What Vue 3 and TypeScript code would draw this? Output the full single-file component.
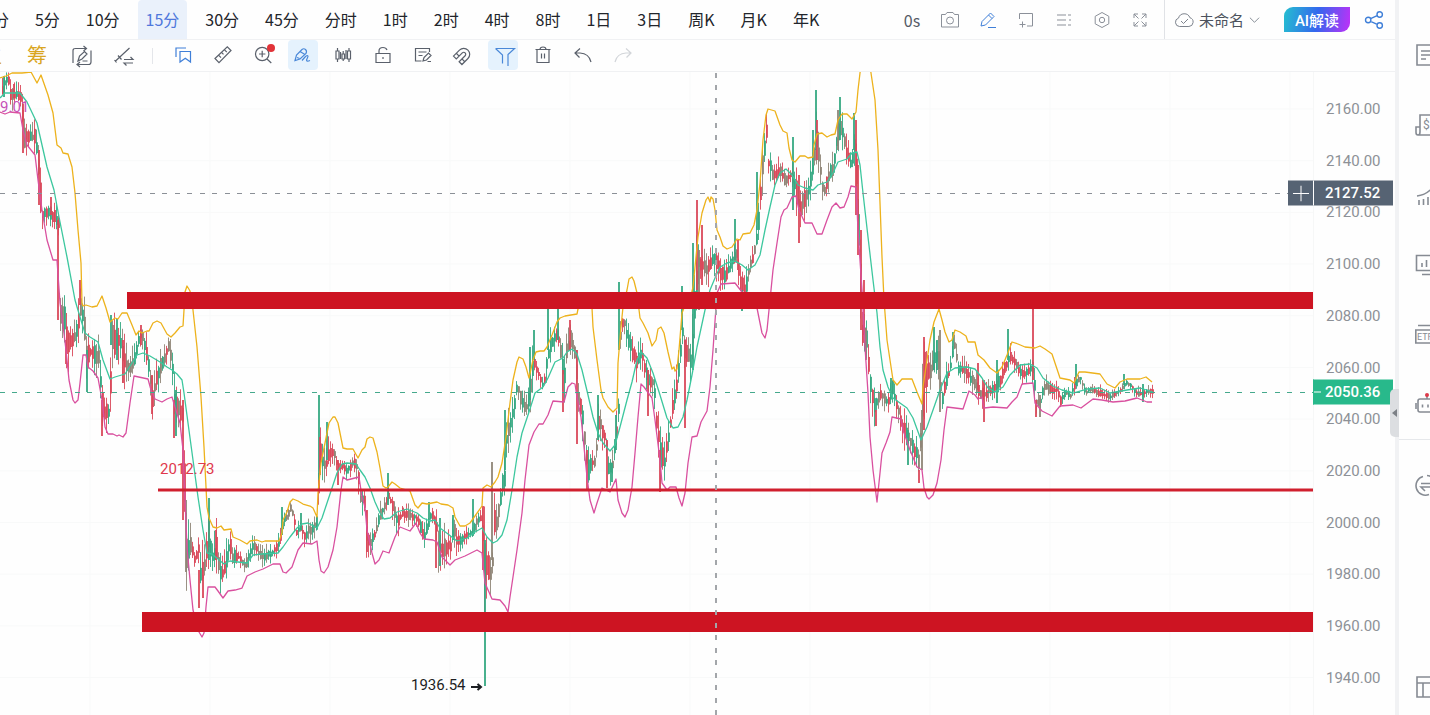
<script setup lang="ts">
interface Icon { d: string; turn?: string; mark?: string; mx?: number; my?: number; ms?: number }
interface Bar { x: number; top: number; bottom: number; tone: string; width: number }

const periods = ['3分', '5分', '10分', '15分', '30分', '45分', '分时', '1时', '2时', '4时', '8时', '1日', '3日', '周K', '月K', '年K']
const activePeriod = '15分'

const headerTools: { label: string; icon: Icon; active?: boolean }[] = [
  { label: '截图', icon: { d: 'M1.5 4.5h4l1.5-2h6l1.5 2h4v12.500h-17zM6.500 10.500a3.500 3.500 0 1 0 7 0a3.500 3.500 0 1 0-7 0' } },
  { label: '画线', icon: { d: 'M3 16l1-4.500 8.500-8.500 3.500 3.500-8.500 8.500zM10.500 5l3.500 3.500M10 17.500h8' }, active: true },
  { label: '添加窗格', icon: { d: 'M3.500 9V3.500h13v12.500H11M3.500 14.500h6M6.500 11.500v6' } },
  { label: '列表', icon: { d: 'M3 5h9M3 10h9M3 15h9M14 5h3M15 10h2M14 15h3' } },
  { label: '设置', icon: { d: 'M10 2.500l6.800 3.800v7.500L10 17.500l-6.800-3.700V6.300zM7.300 10a2.700 2.700 0 1 0 5.400 0a2.700 2.700 0 1 0-5.400 0' } },
  { label: '全屏', icon: { d: 'M4 8V4h4M4 4l4.500 4.500M12 4h4v4M16 4l-4.500 4.500M4 12v4h4M4 16l4.500-4.500M12 16h4v-4M16 16l-4.500-4.500' } },
]

const drawTools: { label: string; icon: Icon; active?: boolean; dot?: boolean; off?: boolean }[] = [
  { label: '书签', icon: { d: 'M3 12V3h10M7 6.500h10.500V17l-5.200-3.700L7 17z' }, active: false },
  { label: '测量', icon: { d: 'M2 13.500L14.300 1.800 18 5.500 6 17.600zM5.500 10.200l2.500 2.500M8.500 7.400l2 2M11.300 4.700l2.500 2.500' } },
  { label: '放大', icon: { d: 'M2.500 9a6.700 6.700 0 1 0 13.400 0a6.700 6.700 0 1 0-13.400 0M14 14l4.300 4M9.200 5.800v6.400M6 9h6.400' }, dot: true },
  { label: '画笔', icon: { d: 'M2 15.500l1.500-5.500L9 4.500q1.800-1.500 3.500 0t.5 4L7 14zM7 6.500l5 3M4 12.500l2.500 1M9 15.500l3.500-4q2.500-2 2.500 0l-1.500 3.500q0 2 3.500.5' }, active: true },
  { label: '蜡烛', icon: { d: 'M3 6h3v8H3zM4.500 3v3M4.500 14v3M9 9h2.500v5H9zM10.200 6v3M10.200 14v2M14.500 6h3v8h-3zM16 3v3M16 14v3M7.500 7v7M13 5v9' } },
  { label: '锁定', icon: { d: 'M3 8.500h14v9H3zM6 8.500V6q0-3.500 4-3.500 3 0 4 2.500M10 12v2' } },
  { label: '备注', icon: { d: 'M16.500 7V3.500h-14v12.500h6M5.500 7h8M5.500 10.500h4M10 16l1-3.500 4.500-4.500 2.500 2.500-4.500 4.500zM14.500 16.500H18' } },
  { label: '磁铁', icon: { d: 'M4 17.500V9a6 6 0 0 1 12 0v8.500h-4V9a2 2 0 0 0-4 0v8.500zM4 13.500h4M12 13.500h4', turn: 'rotate(45 10 10)' } },
  { label: '筛选', icon: { d: 'M2.500 3.500h19l-6.500 6V21M2.500 3.500L9.500 10v8.500' }, active: true },
  { label: '删除', icon: { d: 'M2.500 4.500h15M4 4.500h12v13H4zM7 4.500Q7 2 10 2t3 2.500M8.500 8.500v5M11.500 8.500v5' } },
  { label: '撤销', icon: { d: 'M7 3.500L2 8l4.500 4.500M2 8h5q9 .5 11 9' } },
  { label: '重做', icon: { d: 'M13 3.500L18 8l-4.500 4.500M18 8h-5q-9 .5-11 9' }, off: true },
]

const leadTools: { label: string; icon: Icon }[] = [
  { label: '切换编辑', icon: { d: 'M1 17V4.500Q1 2.500 3.500 2.500H14M11.500 0l3 2.500-3 2.500M19 4.500V16q0 2.500-2.500 2.500H5.500M8 16l-3 2.500L8 21M6 15l1.500-5 5-4.500L15 8l-5 5zM10.500 15h5' } },
  { label: '对比', icon: { d: 'M2 15.500L16.500 2M1.500 14l2 2.500M5 9.500l3.500 4M11 13.500H20l-2.500-2.500M20 17h-9l2.500 2.500' } },
]

const railIcons: { label: string; icon: Icon; alert?: boolean }[] = [
  { label: '资讯', icon: { d: 'M2 2h19v20H2zM6 8h12M6 12h12M6 16h5' } },
  { label: '账单', icon: { d: 'M5 2h17v20H3q-2 0-2-2.500V14h4zM5 14v5q0 3-2 3', mark: '$', mx: 8, my: 16, ms: 12 } },
  { label: '行情', icon: { d: 'M2 13q10-1 17-10M4 17v5M8.500 16v6M13 14v8M17.500 11v11' } },
  { label: '分析', icon: { d: 'M1.500 2.500h22v15h-22zM7 10v4M11.500 7v7M16 9v5M7 21.500h14' } },
  { label: '基金', icon: { d: 'M3 2.500h20M.8 7h23v13H.8z', mark: 'ETF', mx: 2, my: 17, ms: 9 } },
  { label: '助手', icon: { d: 'M5 6h16q2 0 2 2v9q0 2-2 2H5q-2 0-2-2V8q0-2 2-2zM1 10v6M12 3v3M7.500 11.500v3M13 11.500v3' }, alert: true },
]
const exchangeIcon: Icon = { d: 'M8 3.500A9.500 9.500 0 1 0 14 21.500M12 2.500a9.500 9.500 0 0 1 8 5M6 10.500h14l-4-4M20 14H6l4 4' }
const layoutIcon: Icon = { d: 'M2 2h22v20H2zM2 8h22M8 8v14' }

const priceTicks = [2160, 2140, 2120, 2100, 2080, 2060, 2040, 2020, 2000, 1980, 1960, 1940]

const chart = { left: 0, top: 72, width: 1313, height: 643 }
const priceY = (p: number): number => 109 + (2160 - p) * 2.5843
const place = (x: number, y: number) => ({
  left: `${((x - chart.left) / chart.width) * 100}%`,
  top: `${((y - chart.top) / chart.height) * 100}%`,
})
const placeY = (y: number) => ({ top: `${((y - chart.top) / chart.height) * 100}%` })

const gridX = Array.from({ length: 11 }, (_, i) => 90 + i * 120)
const gridY = priceTicks.map(priceY)

const upper = `0,78 6,76 12,73 22,73 31,72 37,83 41,75 48,95 53,113 57,145 61,148 63,153 68,154 72,167 75,193 78,230 81,263 82,303 83,306 86,305 92,307 97,306 102,296 106,308 110,322 115,318 118,319 122,313 127,313 132,325 136,335 139,331 142,333 147,331 149,331 153,323 157,321 161,323 167,334 171,337 175,333 180,327 183,326 184,310 185,292 187,286 190,291 193,310 197,347 201,397 204,447 207,507 209,518 213,527 217,528 221,526 224,530 231,529 233,537 240,540 247,544 250,541 257,540 262,542 265,541 279,541 282,533 283,520 287,512 290,502 293,499 298,501 303,504 310,506 313,508 317,517 318,493 321,463 325,443 329,423 333,417 335,417 338,423 343,448 347,449 353,449 358,458 362,450 365,447 367,439 370,437 373,438 377,452 380,468 383,486 386,488 388,487 392,482 395,484 400,488 410,491 415,505 418,508 422,503 427,504 437,502 441,504 448,505 453,508 455,517 460,526 465,526 470,523 475,516 482,506 483,488 487,485 491,487 495,482 498,477 502,463 506,437 510,403 513,380 517,362 519,357 523,359 526,367 529,378 533,360 536,352 540,351 544,351 547,347 552,335 557,322 560,318 565,316 577,314 578,309 585,306 592,308 593,327 597,360 601,390 603,398 608,407 613,412 617,408 618,363 621,327 623,307 627,290 629,279 632,277 634,281 637,293 640,318 643,323 648,333 652,346 656,340 658,329 661,327 664,333 668,352 672,369 674,367 675,371 677,369 679,350 682,313 686,303 690,300 693,287 698,237 702,213 706,200 708,197 710,202 711,197 713,199 715,210 717,230 720,237 723,246 727,249 732,247 737,239 740,240 743,234 750,233 754,225 757,210 760,183 763,140 766,115 768,109 775,111 780,125 783,131 787,133 789,148 792,160 795,162 800,156 805,156 808,158 813,157 814,145 817,134 822,133 827,137 831,135 835,134 838,120 842,114 847,114 852,119 856,112 858,90 860,73 861,66 870,66 871,73 875,100 878,150 880,203 882,257 884,300 885,313 887,340 890,360 893,380 897,385 902,379 912,379 917,392 922,404 923,387 927,360 930,340 934,322 939,309 942,320 945,332 949,342 952,340 955,330 960,332 966,336 968,342 975,342 978,355 984,360 990,368 997,373 1002,367 1007,355 1012,342 1018,344 1025,347 1035,348 1040,346 1045,349 1052,354 1055,363 1060,378 1070,380 1074,383 1079,372 1085,372 1100,374 1107,384 1115,388 1120,382 1127,379 1140,379 1146,377 1152,382`
const middle = `0,98 5,93 20,93 27,102 37,123 42,145 47,167 54,190 59,217 67,257 75,300 80,317 85,333 90,337 98,342 103,360 110,379 115,377 125,374 132,363 137,355 143,353 150,356 155,359 160,362 167,367 172,370 177,374 182,380 184,393 188,423 193,460 198,497 203,530 207,553 212,554 218,559 224,564 230,561 238,562 247,563 253,555 262,554 278,553 283,547 290,537 297,528 302,524 308,523 317,528 322,518 327,503 332,488 337,473 342,464 347,463 356,464 360,470 365,477 370,488 375,502 380,513 384,519 390,518 397,512 407,509 417,513 423,518 430,521 435,520 440,528 448,534 457,541 467,538 475,532 482,528 487,537 493,543 497,541 502,535 507,520 512,490 517,457 522,433 529,412 535,393 543,387 548,378 555,362 563,358 567,352 572,349 577,354 582,370 588,395 593,417 598,433 603,443 610,451 615,445 620,427 627,400 632,382 637,360 641,352 647,358 653,373 660,395 667,418 673,428 678,427 683,417 687,400 692,375 697,347 705,310 710,290 715,278 720,267 727,263 735,261 742,265 748,270 755,265 760,255 765,230 770,207 775,185 780,173 786,169 792,175 798,185 805,188 813,190 818,185 827,182 833,173 838,162 847,159 852,153 857,152 860,165 863,193 868,237 873,280 877,313 880,347 883,370 888,387 893,398 900,403 907,408 913,418 921,440 927,427 933,410 940,390 947,373 955,368 967,367 975,369 982,378 988,388 995,392 1003,387 1010,375 1020,365 1030,364 1037,368 1043,378 1053,386 1062,390 1073,393 1087,389 1100,388 1110,393 1127,390 1140,388 1153,392`
const lower = `0,112 5,114 10,112 20,113 23,130 27,145 35,155 38,180 42,210 47,240 53,260 57,260 60,303 62,317 66,350 69,380 73,400 75,403 78,400 80,383 83,355 86,355 88,367 93,371 98,378 102,400 105,427 108,434 113,434 117,436 119,435 123,437 126,433 130,403 134,376 148,379 151,390 155,399 162,402 167,399 172,397 175,407 180,423 183,450 185,500 187,547 190,580 193,610 199,632 202,637 204,633 206,607 208,587 215,587 218,591 223,598 228,591 235,590 242,588 247,576 255,572 263,569 273,564 280,564 283,572 286,573 292,567 298,550 303,543 312,544 317,541 319,560 321,571 324,573 328,567 333,550 337,527 341,490 343,477 347,480 359,477 362,497 365,507 367,530 372,553 375,564 379,560 383,551 389,553 395,537 400,527 410,531 416,523 420,533 424,539 433,540 437,542 442,557 450,565 455,560 465,556 477,550 482,553 485,583 492,599 500,600 505,606 508,612 510,597 513,577 517,550 522,513 525,480 529,445 534,432 539,424 543,424 548,415 553,401 564,402 568,387 572,383 575,384 577,397 581,417 584,447 587,477 590,500 594,513 597,503 602,488 610,492 616,479 618,500 622,513 625,517 628,510 632,487 635,453 638,417 641,384 644,387 652,398 655,420 660,460 662,483 667,490 670,487 676,487 679,498 682,506 685,493 688,463 692,437 697,436 701,422 707,411 710,387 713,350 716,307 717,293 721,284 735,283 742,292 750,296 757,308 762,333 765,338 767,330 770,300 773,270 777,243 781,217 784,210 787,208 792,197 796,196 799,210 805,223 812,223 817,234 822,234 827,220 832,207 836,203 840,208 844,207 848,197 851,186 856,187 858,230 862,290 865,347 868,393 870,437 873,470 877,502 880,473 882,453 886,443 890,432 892,417 901,419 903,430 910,450 917,467 922,470 924,488 927,497 929,499 933,495 937,483 941,460 944,430 947,407 963,409 969,391 975,395 978,399 982,397 984,408 993,407 1007,408 1012,402 1017,397 1022,384 1033,383 1035,403 1042,411 1052,416 1060,406 1073,405 1081,408 1093,399 1102,400 1113,402 1125,401 1137,398 1147,402 1152,402`

const ranges = `2,85,98 5,73,82 8,75,85 10,85,100 20,88,102 23,110,130 24,125,150 29,128,145 35,128,145 37,150,165 39,165,200 41,200,230 43,205,220 50,202,220 58,217,230 59,255,290 60,300,330 64,305,330 66,325,362 70,335,350 75,325,345 79,303,325 81,290,320 83,305,340 86,335,365 90,343,360 97,345,370 99,345,375 101,385,412 103,400,425 108,405,420 110,370,400 111,320,350 115,330,360 119,328,350 123,340,370 128,360,377 133,355,375 137,335,350 141,328,340 146,345,365 149,360,380 152,390,410 155,370,390 160,357,375 165,345,362 168,340,355 172,358,375 174,385,420 178,395,420 183,410,425 184,450,510 186,535,570 190,535,553 194,553,565 198,540,555 200,555,590 203,560,585 206,540,560 208,520,550 212,545,565 216,535,560 220,565,585 224,560,578 229,535,552 232,545,567 237,552,560 245,560,572 252,540,550 255,543,552 260,550,562 265,550,562 272,548,557 279,535,548 283,515,525 287,510,520 291,502,512 296,527,535 300,523,532 304,530,540 311,522,535 317,515,530 319,440,470 321,445,470 325,460,475 329,440,458 333,448,458 338,462,472 342,463,470 347,465,475 353,457,468 357,460,475 360,490,505 364,492,510 366,520,545 370,535,548 374,530,540 378,512,525 383,503,512 388,490,500 392,500,512 397,515,530 402,507,517 408,510,522 414,512,520 419,518,530 423,530,545 427,520,530 431,508,518 435,515,525 438,530,560 442,540,560 447,535,555 450,540,553 453,520,535 457,535,550 462,535,545 467,530,538 472,528,537 477,515,525 481,512,520 484,540,600 487,550,580 490,560,580 492,555,570 493,490,540 495,520,540 498,500,520 501,475,500 504,470,490 506,430,450 510,410,435 514,395,410 517,378,390 521,395,412 527,400,412 530,370,400 533,350,370 537,365,378 543,383,390 546,355,375 549,340,355 553,330,345 557,330,340 561,345,365 563,370,400 566,340,360 570,330,350 575,345,365 577,380,400 581,400,425 585,430,455 587,460,485 591,455,470 595,457,468 598,410,430 602,420,440 606,440,450 608,460,475 612,455,475 615,430,450 618,400,420 620,320,350 623,310,325 627,330,345 632,345,362 637,350,370 641,345,362 645,365,378 649,375,390 653,375,390 656,410,430 660,440,470 664,450,470 668,430,445 672,400,415 675,380,400 679,350,370 682,320,340 685,340,370 690,350,370 693,310,340 695,265,320 698,250,275 702,255,275 707,260,280 713,245,262 719,262,280 725,270,285 730,255,270 736,250,260 740,275,292 745,280,300 748,265,275 753,250,262 757,225,245 760,180,205 763,140,170 766,120,140 768,155,170 773,165,185 780,165,180 785,175,187 790,170,180 795,175,200 799,195,220 804,190,210 808,180,200 812,160,180 816,125,150 820,160,180 823,185,200 828,165,185 833,160,175 837,125,145 841,115,135 846,140,160 851,160,172 855,125,150 857,190,240 860,250,300 862,310,350 866,330,350 869,370,390 874,395,415 880,390,400 887,395,408 892,380,395 898,405,418 903,420,440 908,430,445 913,440,458 919,450,472 921,400,440 924,350,400 927,360,385 931,365,380 935,345,360 938,350,370 941,395,410 945,370,390 949,365,375 954,340,350 958,362,378 963,360,375 970,370,385 976,380,395 980,385,400 985,390,400 989,383,395 995,383,393 1000,370,385 1005,360,372 1010,350,362 1015,360,370 1020,368,376 1025,370,380 1030,362,372 1033,355,375 1035,395,410 1040,395,405 1044,380,392 1050,385,395 1056,385,395 1060,395,405 1065,388,396 1070,392,398 1075,378,388 1080,375,382 1085,390,396 1090,386,392 1100,390,398 1110,394,400 1120,387,392 1126,380,385 1132,385,390 1137,390,398 1142,390,396 1148,388,394 1153,388,394`
  .split(' ').map((item) => item.split(',').map(Number))

const spikes = `4,76,97,g 14,84,98,r 23,110,153,r 39,150,205,r 51,197,215,r 58,220,320,r 80,280,305,r 87,350,392,g 66,340,364,r 102,400,436,r 111,315,345,g 117,319,360,g 123,340,383,r 141,325,345,r 152,375,414,r 174,400,438,r 176,390,436,g 183,400,520,r 186,500,572,m 209,498,560,g 199,570,608,r 203,575,598,r 216,530,560,r 319,395,480,g 320,437,475,r 327,422,460,g 338,460,485,r 388,473,505,g 367,510,552,r 436,520,568,r 440,518,566,g 282,507,535,g 301,513,530,g 429,502,520,g 453,515,540,g 473,499,530,g 483,506,570,r 485,540,686,g 492,462,560,m 505,410,470,g 530,347,400,g 534,330,360,g 548,308,350,g 558,308,340,g 563,370,412,r 570,320,350,r 577,350,444,r 587,450,489,r 607,440,488,r 612,463,482,g 598,395,440,g 619,282,350,g 616,415,450,g 660,450,492,r 648,370,416,r 682,286,330,g 685,340,428,r 693,243,370,g 697,200,290,r 699,250,310,m 702,225,285,r 735,219,260,g 738,240,270,r 742,290,311,g 757,172,230,g 793,137,210,g 799,175,243,r 816,90,150,g 813,130,170,g 817,120,160,r 840,97,140,g 838,110,150,m 854,113,150,g 856,120,215,r 858,165,255,r 861,230,330,r 864,280,335,r 866,328,360,m 876,410,426,r 891,378,395,g 908,430,465,g 919,470,483,r 924,337,430,r 922,410,470,m 934,327,370,g 937,340,370,g 940,330,412,m 953,332,350,g 978,363,390,r 984,380,422,r 997,360,403,g 1008,329,360,g 1033,309,380,r 1036,400,417,r 1040,395,417,m 1076,364,385,g 1124,374,385,g 1143,384,402,g`
  .split(' ').map((item) => item.split(','))

const palette: Record<string, string> = { r: '#d9485a', g: '#35a882', m: '#8f8577' }

function buildBars(): Bar[] {
  const bars: Bar[] = []
  let seed = 17
  const next = (): number => {
    seed = (seed * 16807) % 2147483647
    return seed / 2147483647
  }
  let segment = 0
  for (let x = 2; x <= 1152; x += 2) {
    while (segment < ranges.length - 2 && ranges[segment + 1][0] <= x) segment++
    const [x0, t0, b0] = ranges[segment]
    const [x1, t1, b1] = ranges[segment + 1]
    const k = (x - x0) / (x1 - x0)
    const top = t0 + (t1 - t0) * k
    const bottom = b0 + (b1 - b0) * k
    const size = bottom - top
    const roll = next()
    const red = t1 < t0 ? 0.25 : 0.5
    const tone = roll < red ? 'r' : roll < 0.75 ? 'g' : 'm'
    const start = top + size * next() * 0.4
    const end = bottom - size * next() * 0.35
    bars.push({ x, top: start, bottom: end, tone, width: 2 })
    bars.push({ x, top: start - size * next() * 0.8, bottom: end + size * next() * 0.8, tone, width: 1 })
  }
  for (const [x, top, bottom, tone] of spikes) bars.push({ x: Number(x) - 1, top: Number(top), bottom: Number(bottom), tone, width: 2 })
  return bars
}
const bars = buildBars()
</script>

<template>
  <div class="app">
    <main class="main">
      <header class="head">
        <nav class="periods" aria-label="周期">
          <button v-for="p in periods" :key="p" type="button" class="period" :class="{ on: p === activePeriod }">{{ p }}</button>
        </nav>
        <div class="tools">
          <button type="button" class="seconds">0s</button>
          <button v-for="t in headerTools" :key="t.label" type="button" class="tool" :class="{ blue: t.active }" :aria-label="t.label">
            <svg class="icon" viewBox="0 0 20 20"><path :d="t.icon.d" /></svg>
          </button>
        </div>
        <div class="account">
          <button type="button" class="name">
            <svg class="icon" viewBox="0 0 20 20"><path d="M5.500 16.500a4.300 4.300 0 0 1-1-8.400 6 6 0 0 1 11.400-.4 4.500 4.500 0 0 1-1 8.800zM7 11l2.500 2.500L14 9" /></svg>
            <span>未命名</span>
            <svg class="chevron" viewBox="0 0 12 8"><path d="M1 1.500l5 5 5-5" /></svg>
          </button>
          <button type="button" class="ai">AI解读</button>
          <button type="button" class="share" aria-label="分享">
            <svg class="icon" viewBox="0 0 20 20"><path d="M1.500 10a2.700 2.700 0 1 0 5.400 0a2.700 2.700 0 1 0-5.400 0M13 4.500a2.700 2.700 0 1 0 5.400 0a2.700 2.700 0 1 0-5.400 0M13 15.500a2.700 2.700 0 1 0 5.400 0a2.700 2.700 0 1 0-5.400 0M6.600 8.700L13.200 5.600M6.600 11.300l6.600 3" /></svg>
          </button>
        </div>
      </header>

      <div class="draw" role="toolbar" aria-label="画图工具">
        <div class="lead">
          <button type="button" class="glyph">主</button>
          <button type="button" class="glyph">筹</button>
          <button v-for="t in leadTools" :key="t.label" type="button" class="swap" :aria-label="t.label">
            <svg class="icon" viewBox="0 0 20 20"><path :d="t.icon.d" /></svg>
          </button>
        </div>
        <div class="marks">
          <button v-for="(t, i) in drawTools" :key="t.label" type="button" class="mark" :class="{ on: t.active, blue: i === 0, off: t.off }" :aria-label="t.label">
            <svg class="icon" viewBox="0 0 20 20"><path :d="t.icon.d" :transform="t.icon.turn" /></svg>
            <i v-if="t.dot" class="dot"></i>
          </button>
        </div>
      </div>

      <section class="stage">
        <div class="pane">
          <svg class="plot" viewBox="0 72 1313 643" preserveAspectRatio="none" role="img" aria-label="K线图">
            <g class="grid">
              <line v-for="x in gridX" :key="'x' + x" :x1="x" :x2="x" y1="72" y2="715" />
              <line v-for="y in gridY" :key="'y' + y" x1="0" x2="1313" :y1="y" :y2="y" />
            </g>
            <g class="bars">
              <rect v-for="(b, i) in bars" :key="i" :x="b.x" :y="b.top" :width="b.width" :height="b.bottom - b.top" :fill="palette[b.tone]" />
            </g>
            <polyline class="band gold" :points="upper" />
            <polyline class="band teal" :points="middle" />
            <polyline class="band pink" :points="lower" />
            <line class="last" x1="0" x2="1313" y1="392.5" y2="392.5" />
            <line class="cross" x1="0" x2="1288" y1="193.5" y2="193.5" />
            <rect class="zone" x="127" y="292" width="1186" height="17" />
            <rect class="zone" x="142" y="612" width="1171" height="20" />
            <line class="level" x1="158" x2="1313" y1="490" y2="490" />
            <line class="cross tall" x1="716" x2="716" y1="73" y2="715" />
          </svg>
          <span class="note purple" :style="place(0, 107)">9.01</span>
          <span class="note red" :style="place(160, 469)">2012.73</span>
          <span class="note" :style="place(411, 685)">1936.54
            <svg class="arrow" viewBox="0 0 12 8"><path d="M0 4h10M6.500 1L10 4 6.500 7" /></svg>
          </span>
          <button type="button" class="plus" :style="placeY(193)" aria-label="添加">
            <svg viewBox="0 0 16 16"><path d="M8 0v16M0 8h16" /></svg>
          </button>
        </div>
        <div class="axis">
          <ol class="ticks">
            <li v-for="p in priceTicks" :key="p">{{ p.toFixed(2) }}</li>
          </ol>
          <output class="tag slate" :style="placeY(193)">2127.52</output>
          <output class="tag green" :style="placeY(392)">2050.36</output>
        </div>
      </section>
    </main>

    <aside class="rail">
      <button type="button" class="fold" aria-label="展开侧栏"></button>
      <div class="group">
        <button v-for="r in railIcons" :key="r.label" type="button" class="side" :aria-label="r.label">
          <svg viewBox="0 0 24 24">
            <path :d="r.icon.d" />
            <text v-if="r.icon.mark" :x="r.icon.mx" :y="r.icon.my" :font-size="r.icon.ms">{{ r.icon.mark }}</text>
            <circle v-if="r.alert" class="alert" cx="12" cy="2" r="2" />
          </svg>
        </button>
      </div>
      <button type="button" class="side swapper" aria-label="兑换"><svg viewBox="0 0 24 24"><path :d="exchangeIcon.d" /></svg></button>
      <button type="button" class="side last-side" aria-label="布局"><svg viewBox="0 0 24 24"><path :d="layoutIcon.d" /></svg></button>
    </aside>
  </div>
</template>

<style>
body {
  margin: 0;
  background: #fff;
}
</style>

<style scoped>
.app {
  display: flex;
  height: 100vh;
  min-height: 560px;
  overflow: hidden;
  background: #fefefe;
  color: #22252b;
  font-family: Roboto, "Noto Sans CJK SC", sans-serif;
}
button {
  padding: 0;
  border: 0;
  background: none;
  color: inherit;
  font: inherit;
  cursor: pointer;
}
svg {
  display: block;
  fill: none;
  stroke: currentColor;
}
.main {
  flex: 1;
  min-width: 0;
  display: flex;
  flex-direction: column;
}
.head {
  display: flex;
  height: 39px;
  border-bottom: 1px solid #f0f1f3;
}
.periods {
  flex: 1;
  min-width: 0;
  display: flex;
  gap: 10px;
  margin-left: -24px;
  overflow: hidden;
}
.period {
  flex: none;
  padding: 0 8px 2px;
  border-radius: 4px 4px 0 0;
  font-family: "Noto Sans CJK SC", sans-serif;
  font-size: 16px;
  white-space: nowrap;
}
.period.on {
  background: #eaf1fb;
  color: #4f78dc;
}
.tools {
  display: flex;
  align-items: center;
  gap: 10px;
  padding-right: 10px;
  border-right: 1px solid #e0e2e6;
}
.seconds {
  width: 28px;
  color: #555b66;
  font-family: "Noto Sans CJK SC", sans-serif;
  font-size: 16px;
}
.tool {
  display: grid;
  place-items: center;
  width: 28px;
  height: 28px;
  color: #8b9099;
}
.icon {
  width: 20px;
  height: 20px;
  overflow: visible;
}
.tool.blue,
.share {
  color: #3f7fd8;
}
.share .icon {
  stroke-width: 1.4;
}
.account {
  display: flex;
  align-items: center;
  padding: 0 11px 0 9px;
}
.name {
  display: flex;
  align-items: center;
  gap: 5px;
  margin-right: 24px;
  color: #4c525d;
  font-size: 15px;
}
.name svg {
  color: #7d838d;
}
.chevron {
  width: 11px;
  height: 8px;
}
.ai {
  width: 66px;
  height: 25px;
  margin-right: 14px;
  border-radius: 9px 0;
  background: linear-gradient(100deg, #25bfd0, #3467ee 50%, #c030f8);
  color: #fff;
  font-size: 15px;
  font-weight: 500;
}
.draw {
  display: flex;
  align-items: flex-start;
  height: 31px;
  border-bottom: 1px solid #f0f1f3;
  color: #5a606b;
}
.draw .icon {
  stroke-width: 1.2;
}
.lead {
  display: flex;
  align-items: center;
  gap: 25px;
  width: 152px;
  height: 16px;
  margin-top: 8px;
  margin-left: -18px;
  border-right: 1px solid #e4e6ea;
  padding-right: 18px;
  box-sizing: content-box;
}
.glyph {
  flex: none;
  color: #d9a520;
  font-size: 20px;
  line-height: 30px;
}
.swap {
  flex: none;
  width: 20px;
}
.swap + .swap {
  margin-left: -4px;
}
.marks {
  display: flex;
  gap: 10px;
  margin-left: 15px;
}
.mark {
  position: relative;
  display: grid;
  place-items: center;
  width: 30px;
  height: 30px;
  border-radius: 4px;
}
.mark.on {
  background: #e5f2fd;
  color: #4a88d8;
}
.mark.blue {
  color: #3f7fd8;
}
.mark.off {
  color: #d2d5d9;
}
.dot {
  position: absolute;
  top: 4px;
  right: 3px;
  width: 8px;
  height: 8px;
  border-radius: 50%;
  background: #e13338;
}
.stage {
  flex: 1;
  min-height: 0;
  display: grid;
  grid-template-columns: minmax(0, 1fr) 82px;
  grid-template-rows: minmax(0, 1fr);
}
.pane {
  position: relative;
  overflow: hidden;
}
.plot {
  width: 100%;
  height: 100%;
  stroke: none;
}
.grid line {
  stroke: #f8f9f9;
}
.bars rect {
  opacity: 0.9;
}
.band {
  stroke-width: 1.3;
  stroke-linejoin: round;
}
.gold {
  stroke: #edb21c;
}
.teal {
  stroke: #3cc79e;
}
.pink {
  stroke: #d9509f;
}
.last {
  stroke: #45a98c;
  stroke-dasharray: 5 7 5 8;
}
.cross {
  stroke: #8b9097;
  stroke-dasharray: 5 7 5 8;
}
.cross.tall {
  stroke: #a3a6aa;
  stroke-width: 2;
}
.zone {
  fill: #cd1422;
}
.level {
  stroke: #d01f2e;
  stroke-width: 3;
}
.note {
  position: absolute;
  display: flex;
  align-items: center;
  gap: 5px;
  transform: translateY(-50%);
  color: #1d1f23;
  font-size: 15px;
  line-height: 20px;
}
.note.purple {
  color: #c552b8;
}
.note.red {
  color: #e0384c;
}
.arrow {
  width: 12px;
  height: 8px;
  margin-top: 4px;
  stroke-width: 2;
}
.plus {
  position: absolute;
  right: 0;
  display: grid;
  place-items: center;
  width: 25px;
  height: 25px;
  transform: translateY(-50%);
  background: #566373;
  color: #fff;
}
.plus svg {
  width: 16px;
  height: 16px;
}
.axis {
  position: relative;
  color: #8d9197;
  font-size: 15px;
  line-height: 20px;
}
.ticks {
  display: flex;
  flex-direction: column;
  justify-content: space-between;
  height: 100%;
  box-sizing: border-box;
  margin: 0;
  padding: 27px 0 27px 12px;
  border-left: 1px solid #f6f7f7;
  list-style: none;
}
.tag {
  position: absolute;
  left: 0;
  right: 2px;
  padding-left: 11px;
  transform: translateY(-50%);
  color: #fff;
  font-weight: 500;
  line-height: 25px;
  border-left: 1px solid #fff;
}
.slate {
  background: #566373;
}
.green {
  border-left-color: #28b98b;
  background: linear-gradient(#fff, #fff) 0 50% / 7px 1px no-repeat #28b98b;
}
.rail {
  position: relative;
  flex: none;
  display: flex;
  flex-direction: column;
  width: 31px;
  border-left: 4px solid #f1f2f4;
  color: #868b93;
}
.group {
  display: flex;
  flex-direction: column;
  gap: 46px;
  padding: 43px 0 22px;
  border-bottom: 1px solid #e6e8eb;
}
.group,
.side {
  overflow: hidden;
}
.side {
  flex: none;
  width: 100%;
  height: 24px;
  padding-left: 16px;
}
.side svg {
  width: 24px;
  height: 24px;
  stroke-width: 1.6;
}
.side text {
  fill: currentColor;
  stroke: none;
}
.side .alert {
  fill: #dd3a4a;
  stroke: none;
}
.swapper {
  margin-top: 33px;
}
.last-side {
  margin-top: auto;
  margin-bottom: 16px;
}
.fold {
  position: absolute;
  left: -9px;
  top: 389px;
  display: grid;
  place-items: center;
  width: 9px;
  height: 48px;
  border-radius: 5px 0 0 5px;
  background: #dcdee1;
}
.fold::before {
  content: "";
  border: 4px solid transparent;
  border-right: 5px solid #7c8086;
  border-left: 0;
}
</style>
